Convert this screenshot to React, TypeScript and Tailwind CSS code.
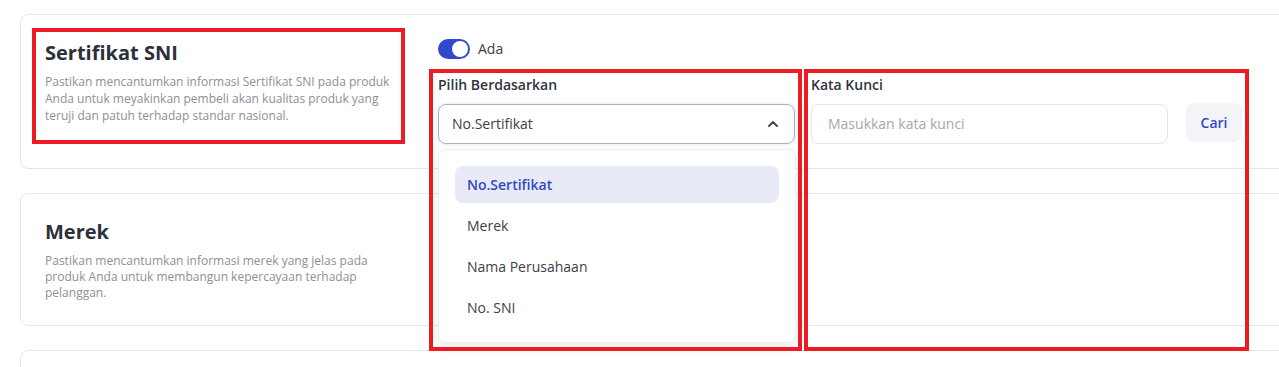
const options = ["No.Sertifikat", "Merek", "Nama Perusahaan", "No. SNI"];

function Toggle() {
  return (
    <div className="flex items-center gap-2">
      <div className="flex h-5 w-8 items-center justify-end rounded-full bg-[#3049cc] px-[2px]">
        <div className="h-4 w-4 rounded-full bg-white" />
      </div>
      <span className="text-sm text-[#3b4049]">Ada</span>
    </div>
  );
}

export default function App() {
  return (
    <div className="relative h-[367px] w-full overflow-hidden bg-white pl-[20px] pt-[14px] font-['Open_Sans',sans-serif]">
      <div className="flex w-[1300px] flex-col gap-6">
        {/* Sertifikat SNI */}
        <div className="relative z-10 flex gap-[38px] rounded-lg border border-[#e4e6ea] p-6">
          <div className="w-[355px]">
            <h3 className="text-[20px] font-bold leading-7 text-[#2b303a]">Sertifikat SNI</h3>
            <p className="mt-[7px] text-xs leading-[16.8px] text-[#8b9099]">
              Pastikan mencantumkan informasi Sertifikat SNI pada produk Anda untuk meyakinkan pembeli akan kualitas produk yang teruji dan patuh terhadap standar nasional.
            </p>
          </div>
          <div className="flex flex-col">
            <Toggle />
            <div className="mt-4 flex items-start">
              <div className="w-[357px]">
                <div className="text-sm font-semibold leading-5 text-[#2f343e]">Pilih Berdasarkan</div>
                <div className="relative mt-[9px]">
                  <div className="flex h-10 items-center justify-between rounded-lg border border-[#a9afc3] pl-[13px] pr-4 shadow-[0_0_0_2px_rgba(120,130,180,0.08)]">
                    <span className="text-sm text-[#3b4049]">No.Sertifikat</span>
                    <svg width="10" height="6" viewBox="0 0 10 6" fill="none">
                      <polyline points="1,5 5,1 9,5" stroke="#3f4550" strokeWidth="1.8" strokeLinecap="round" strokeLinejoin="round" />
                    </svg>
                  </div>
                  <div className="absolute left-0 top-[45px] flex w-[358px] flex-col gap-1 rounded-lg border border-[#eceef2] bg-white p-4 shadow-[0_4px_12px_rgba(0,0,0,0.08)]">
                    {options.map((o, i) => (
                      <div
                        key={o}
                        className={
                          i === 0
                            ? "flex h-[37px] items-center rounded-lg bg-[#e8eaf7] px-3 text-sm font-semibold text-[#3347c6]"
                            : "flex h-[37px] items-center rounded-lg px-3 text-sm text-[#3b4049]"
                        }
                      >
                        {o}
                      </div>
                    ))}
                  </div>
                </div>
              </div>
              <div className="ml-4 w-[357px]">
                <div className="text-sm font-semibold leading-5 text-[#2f343e]">Kata Kunci</div>
                <div className="mt-[9px] flex h-10 items-center rounded-lg border border-[#e4e6ea] px-4">
                  <span className="text-sm text-[#a3a7b0]">Masukkan kata kunci</span>
                </div>
              </div>
              <button className="ml-[18px] mt-[28px] flex h-[39px] w-[56px] items-center justify-center rounded-lg bg-[#f3f4f8] text-sm font-semibold text-[#3347c6]">
                Cari
              </button>
            </div>
          </div>
        </div>

        {/* Merek */}
        <div className="rounded-lg border border-[#e4e6ea] p-6">
          <div className="w-[355px]">
            <h3 className="text-[20px] font-bold leading-7 text-[#2b303a]">Merek</h3>
            <p className="mt-[7px] text-xs leading-4 text-[#8b9099]">
              Pastikan mencantumkan informasi merek yang jelas pada produk Anda untuk membangun kepercayaan terhadap pelanggan.
            </p>
          </div>
        </div>

        <div className="h-[120px] rounded-lg border border-[#e4e6ea]" />
      </div>

      {/* annotation boxes */}
      <div className="pointer-events-none absolute left-[32px] top-[28px] z-20 h-[116px] w-[373px] border-4 border-[#ed1c24]" />
      <div className="pointer-events-none absolute left-[429px] top-[69px] z-20 h-[282px] w-[373px] border-4 border-[#ed1c24]" />
      <div className="pointer-events-none absolute left-[804px] top-[69px] z-20 h-[282px] w-[445px] border-4 border-[#ed1c24]" />
    </div>
  );
}
